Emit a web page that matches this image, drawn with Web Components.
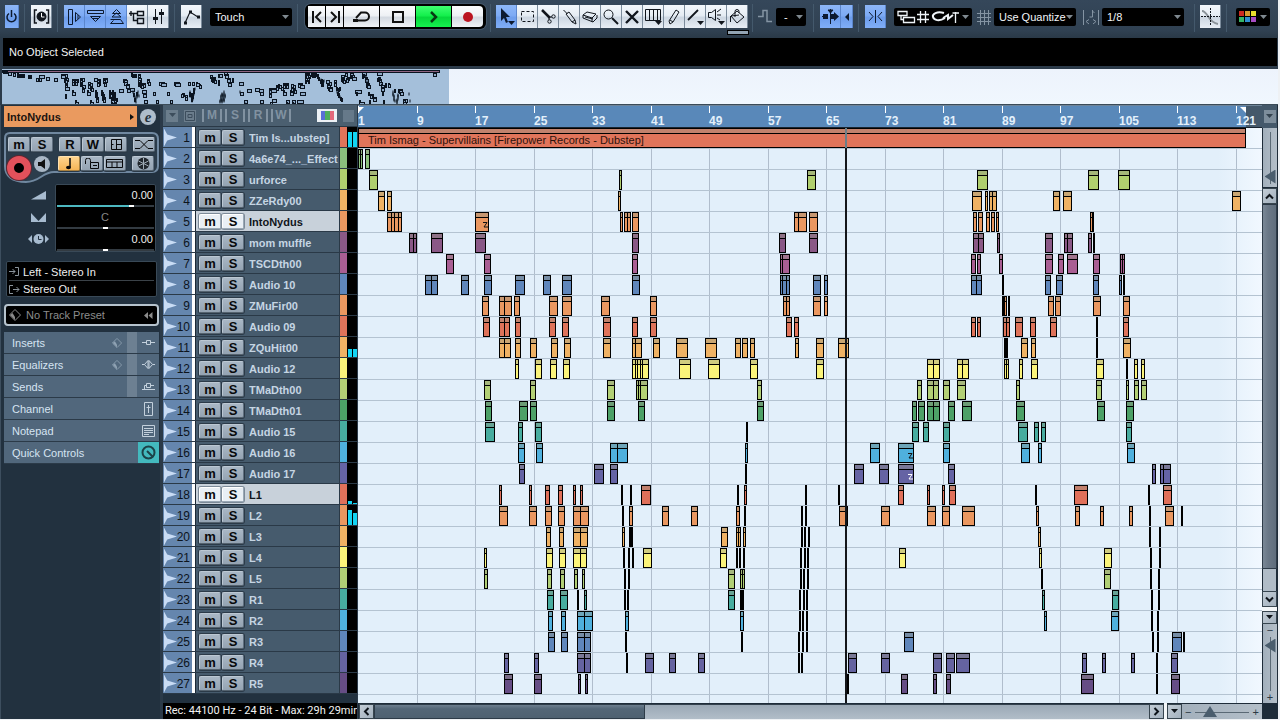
<!DOCTYPE html>
<html lang="en">
<head>
<meta charset="utf-8">
<title>Project window</title>
<style>
  html, body { height: 100%; }
  body { margin: 0; background: #eef1f4; font: 11px/14px "Liberation Sans", Arial, sans-serif; color: #fff; overflow: hidden; }
</style>
</head>
<body>
<daw-project></daw-project>
<script>
const TRACKS = [
  ["Tim Is...ubstep]", "#e0745a", "0 888"],
  ["4a6e74_..._Effect", "#8abf7c", "0 3 2 3 7 5"],
  ["urforce", "#b0cf6e", "11 9 261 3 449 9 619 11 730 11 760 12"],
  ["ZZeRdy00", "#efb264", "20 7 29 5 260 3 614 10 627 3 631 4 634 5 695 7 705 9 874 9"],
  ["IntoNydus", "#ea9760", "29 5 33 4 36 5 40 4 117 14 262 3 266 4 269 4 274 7 436 5 440 9 451 9 615 4 620 5 628 4 633 4 638 3 732 3 734 2"],
  ["mom muffle", "#8a5886", "51 5 55 4 73 12 117 11 274 7 421 7 451 9 615 6 620 6 639 3 687 8 706 4 709 6 730 4 735 2"],
  ["TSCDth00", "#a95e93", "88 8 126 7 274 6 422 3 424 8 613 5 619 4 641 4 687 8 700 6 709 11 735 7 762 3 764 3"],
  ["Audio 10", "#5f86bb", "67 7 73 7 103 8 126 8 157 10 185 8 204 10 274 8 422 3 424 5 428 4 455 8 466 4 613 6 618 6 644 2 687 6 698 7 735 6 761 3 765 2"],
  ["ZMuFir00", "#ea9760", "124 7 141 6 146 8 156 6 191 9 204 10 243 9 292 7 425 4 428 4 455 8 466 4 644 2 646 3 650 2 690 6 697 6 735 8 765 7"],
  ["Audio 09", "#df735a", "125 7 141 6 146 6 157 6 191 7 204 7 245 8 274 6 292 7 428 6 436 5 613 5 619 4 645 4 648 4 657 8 672 6 692 7 738 2 765 6"],
  ["ZQuHit00", "#efb264", "141 6 146 7 157 6 172 7 193 7 206 7 245 8 274 4 277 7 295 7 318 12 347 12 377 6 384 6 392 5 437 4 458 8 480 11 646 2 648 2 663 7 673 5 738 2 765 8"],
  ["Audio 12", "#faf37a", "157 4 177 7 192 7 205 7 274 4 277 3 279 4 282 3 284 7 321 12 350 12 392 8 458 8 569 7 575 7 599 6 604 7 646 3 648 3 661 4 673 7 738 8 768 2 776 4 783 4"],
  ["TMaDth00", "#b3d075", "126 7 172 6 249 8 278 3 280 3 282 8 399 5 559 5 569 7 575 6 585 7 599 9 658 4 738 6 768 3 776 5 783 6"],
  ["TMaDth01", "#4da167", "127 7 161 9 172 7 249 8 280 7 399 7 554 5 560 7 569 7 575 7 590 7 604 10 658 9 739 8 768 8"],
  ["Audio 15", "#47ac9f", "127 10 160 5 177 7 388 2 554 7 565 6 585 7 660 10 676 5 683 5 768 6"],
  ["Audio 16", "#4fb0dd", "160 7 178 7 252 8 259 11 387 3 512 10 540 16 585 7 663 9 680 4 769 8"],
  ["Audio 17", "#6563a4", "161 6 236 10 252 8 387 2 496 10 521 10 540 16 590 7 794 4 802 4 805 8"],
  ["L1", "#e0705a", "141 3 171 3 187 5 200 5 215 3 222 3 263 2 272 2 283 10 379 2 386 3 447 2 480 2 540 6 569 3 584 3 591 7 677 2 716 14 790 2 805 9"],
  ["L2", "#ea9760", "141 9 171 8 187 7 200 7 215 8 222 9 264 2 271 4 304 7 333 7 378 4 386 2 443 2 447 2 481 9 523 9 569 9 584 8 604 13 678 3 717 5 742 4 771 4 791 2 807 9 823 2"],
  ["L3", "#efb264", "188 5 201 5 215 8 222 8 264 3 271 2 273 2 363 7 378 3 380 3 385 3 443 2 446 2 450 2 680 3 791 2 801 2"],
  ["L4", "#faf37a", "126 3 188 7 201 7 215 8 222 7 265 2 270 2 274 2 285 9 362 7 378 2 381 2 385 2 442 2 446 2 449 2 541 7 681 3 746 8 792 2 801 2"],
  ["L5", "#b0cf75", "126 4 189 5 202 5 216 4 224 3 266 2 270 2 370 7 382 3 384 3 442 2 445 2 449 2 683 2 746 7 792 2 800 2"],
  ["R1", "#47ac9f", "189 7 202 8 219 2 226 3 266 2 269 2 370 7 382 2 384 2 441 2 445 2 448 2 684 3 754 7 793 2 800 2"],
  ["R2", "#4fb0dd", "190 5 203 5 219 8 226 9 267 4 382 4 441 2 444 2 448 2 686 3 753 8 793 2 799 2"],
  ["R3", "#5f86bb", "190 7 203 7 219 8 226 7 267 2 383 2 440 2 444 2 448 2 546 10 794 2 799 2 814 10 825 2"],
  ["R4", "#6563a0", "146 5 176 5 219 8 226 7 268 2 287 9 311 7 340 7 440 2 443 2 490 9 523 9 575 9 588 9 598 14 724 5 744 4 773 4 798 2 813 7"],
  ["R5", "#664d85", "146 9 176 8 220 3 227 3 489 2 543 7 575 4 588 5 723 13 798 2 813 9"]
].map(([name, color, clips]) => {
  const n = clips.split(" ").map(Number), list = [];
  for (let i = 0; i < n.length; i += 2) list.push([n[i], n[i + 1]]);
  return { name, color, clips: list };
});
const METERS = { 1: [15, 15], 11: [8, 8], 18: [3, 1], 19: [15, 12] };
const SELECTED = [5, 18];
const PLAYHEAD = 487;

const I = (w, h, body) => `<svg width="${w}" height="${h}" viewBox="0 0 ${w} ${h}" fill="none" stroke="currentColor" aria-hidden="true">${body}</svg>`;
const ICONS = {
  power: I(13,15,'<path d="M4 4.5a4.5 4.5 0 1 0 5 0M6.500 1v7" stroke-width="1.500"/>'),
  clock: I(17,15,'<path d="M4 1H1.500v13H4M13 1h2.500v13H13" stroke-width="1.500"/><circle cx="8.500" cy="7.500" r="4.500" fill="currentColor"/><path d="M8.500 4v4h3" stroke="#fff"/>'),
  showLeft: I(17,16,'<path d="M2.500.5h4v15h-4zM9.500 3.500l5 4.500-5 4.500zM12 6v4"/>'),
  showInfo: I(17,16,'<path d="M.5 1.500h16v3H.5zM3.500 7.500h10l-5 5zM6 9.500h5"/>'),
  showOver: I(17,16,'<path d="M8.500.5l4 4h-8zM5 7l3.500-3L13 8H4zM2.500 10.500h10l3 4h-13l3-3"/>'),
  tree: I(17,16,'<path d="M8.500 2.500h6v4h-6zM8.500 9.500h6v5h-6zM0 4.500h8M4.500 4.500v7H8M2 2v5" stroke-width="1.400"/>'),
  mixer: I(13,16,'<path d="M3.500 0v15M9.500 0v15"/><path d="M1 9.500h5M7 4.500h5" stroke-width="3"/>'),
  auto: I(17,16,'<path d="M2 14L7 3l8 5" stroke-width="1.200"/><path d="M1 14h3M6 3h3M14 8h3" stroke-width="3"/>'),
  prev: I(12,12,'<path d="M2 0v12M10 1L5 6l5 5" stroke-width="2"/>'),
  next: I(12,12,'<path d="M10 0v12M2 1l5 5-5 5" stroke-width="2"/>'),
  loop: I(20,13,'<path d="M3 10.500h10a4 4 0 0 0 0-8H9L4 8" stroke-width="2"/><path d="M1 10.500h5" stroke-width="3"/>'),
  stop: I(12,12,'<path d="M1 1h10v10H1z" stroke-width="2"/>'),
  play: I(10,12,'<path d="M2 1l5 5-5 5" stroke-width="2.500"/>'),
  rec: I(12,12,'<circle cx="6" cy="6" r="5" fill="#bb1421" stroke="none"/>'),
  cursor: I(17,19,'<path d="M3 1v13l3-3 2 5 2-1-2-5h4z" fill="currentColor" stroke="none"/><path d="M10 14h7l-3.500 4z" fill="currentColor" stroke="none"/>'),
  range: I(15,13,'<path d="M1.500 1.500h12v10h-12z" stroke-dasharray="3 2"/>'),
  split: I(15,15,'<path d="M1 1l8 8" stroke-width="2.500"/><circle cx="12.500" cy="7.500" r="1.700"/><circle cx="8.500" cy="12.500" r="1.700"/><path d="M8 8l3 0M8 8v3"/>'),
  glue: I(15,16,'<path d="M1.500 1l4 4M4 5l3-2 6 8-3 2zM10 13l4 2-1-4"/>'),
  erase: I(16,14,'<path d="M1 5l4-3 9 2-4 4zM1 5v3l10 4 4-4V5M10 8v4M3 7l8 2"/>'),
  zoom: I(16,16,'<circle cx="5.500" cy="5.500" r="4.500"/><path d="M9 9l6 6" stroke-width="2"/>'),
  mute: I(14,14,'<path d="M1 1l12 12M13 1L1 13" stroke-width="2.400"/>'),
  warp: I(17,18,'<path d="M.5 1.500h15v11H.5zM4.500 2v10M8.500 2v10M12.500 2v10"/><path d="M10 13h7l-3.500 4z" fill="currentColor" stroke="none"/>'),
  pen: I(12,16,'<path d="M8 1l3 2-6 10-3 2-1-3zM2 11l3 2"/>'),
  line: I(17,18,'<path d="M1 12L11 2" stroke-width="1.800"/><path d="M10 13h7l-3.500 4z" fill="currentColor" stroke="none"/>'),
  speak: I(17,18,'<path d="M.5 4.500h3l4-3v11l-4-3h-3zM9 4l4-3M9 7h4M9 10l3 2"/><path d="M10 13h7l-3.500 4z" fill="currentColor" stroke="none"/>'),
  bucket: I(16,16,'<path d="M2 7l6-5 7 6-7 6zM6 8V2.500a2 2 0 0 1 4 0V4M1.500 7v6M2 7l8-1"/>'),
  step: I(15,15,'<path d="M0 7.500h5V1.500h4v11h5" stroke-width="1.500"/>'),
  scroll: I(17,15,'<path d="M8.500 0v15M0 7.500h6"/><path d="M1 5h5v5H1zM9 5h3V3l5 4.500L12 12v-2H9z" fill="currentColor" stroke="none"/><path d="M6 1h5l-2.500 3z" fill="currentColor"/>'),
  small: I(6,8,'<path d="M5 0v8L1 4z" fill="currentColor" stroke="none"/>'),
  snap: I(15,13,'<path d="M7.500 0v13M1 2l4 4.500L1 11M14 2l-4 4.500 4 4.500"/>'),
  snapType: I(62,14,'<path d="M1 1.500h9v4H1zM6.500 7.500h11v5h-11zM4 5.500v4h3M20 4.500h12M20 9.500h12M23.500 1v12M28.500 1v12M58.500 2v11M55.500 3h7" stroke-width="1.300"/><path d="M47 3c-7-2-12 1-11 4s6 5 12 1M46 8l5-3v4l5-4" stroke-width="2"/>'),
  grid: I(14,16,'<path d="M0 4.500h14M0 8.500h14M0 12.500h14M3.500 1v15M7.500 1v15M11.500 1v15"/>'),
  quant: I(16,17,'<path d="M.5 1v15M15.500 1v15M9.500 1v7M6.500 8h3M9.500 2l2 2M3 12.500l3-2M3 12.500l3 2.500M13 12.500l-3-2M13 12.500L10 15"/>'),
  xfade: I(19,17,'<path d="M1 3c6 0 6 12 16 13" stroke="#8a9298" stroke-width="2"/><path d="M9.500 0v17M0 8.500h19" stroke-dasharray="2 1"/>'),
  palette: I(18,12,'<g stroke="none"><path fill="#cc2b22" d="M0 0h5v5H0z"/><path fill="#d49a31" d="M6 0h5v5H6z"/><path fill="#e8dc2c" d="M12 0h5v5h-5z"/><path fill="#35b566" d="M0 6h5v5H0z"/><path fill="#2e8fd0" d="M6 6h5v5H6z"/><path fill="#a94cc4" d="M12 6h5v5h-5z"/></g>'),
  panel: I(13,11,'<path d="M1.500.5h10v10h-10zM6.500.5v10M6.500 5.500h5M1.500 5.500h2"/>'),
  cross: I(18,11,'<path d="M0 1.500h5l8 8h5M0 9.500h5l8-8h5"/>'),
  note: I(8,12,'<path d="M5 0v9" stroke-width="1.500"/><ellipse cx="3.500" cy="9.500" rx="2.500" ry="1.800" fill="currentColor" stroke="none"/>'),
  lock: I(16,11,'<path d="M6.500 4.500h8v6h-8zM1.500 6V2.500a2 2 0 0 1 5 0v2M9 7.500h4"/>'),
  lanes: I(18,9,'<path d="M.5.5h16v8H.5zM.5 3h16M6 3v5.500M11 3v5.500"/>'),
  snow: I(13,13,'<circle cx="6.500" cy="6.500" r="6" fill="#20262c" stroke="none"/><path d="M6.500 1v11M1.500 4l10 5M11.500 4l-10 5" stroke="#9eaab4"/>'),
  mon: I(9,10,'<path d="M0 3h3l4-3v10L3 7H0z" fill="currentColor" stroke="none"/>'),
  vol: I(15,9,'<path d="M0 8.500L15 0v8.500z" fill="#a7bbcf" stroke="none"/>'),
  pan: I(15,9,'<path d="M0 0v9h15V0L7.500 8z" fill="#a7bbcf" stroke="none"/>'),
  delay: I(21,10,'<g fill="#a7bbcf" stroke="none"><path d="M4 1v8L0 5zM17 1v8l4-4z"/><circle cx="10.500" cy="5" r="5"/></g><path d="M10.500 2v3.500h3" stroke="#22303f"/>'),
  input: I(11,9,'<path d="M0 4.500h6M3.500 2L6 4.500 3.500 7M6 .5h3.500v8H6"/>'),
  output: I(11,9,'<path d="M4 .5H.5v8H4M4 4.500h6M7.500 2L10 4.500 7.500 7"/>'),
  diamond: I(12,12,'<path d="M6 .5L11.500 6 6 11.500.5 6z"/><path d="M1 6l5 5V8L3.500 4z" fill="currentColor" stroke="none"/>'),
  rew: I(9,7,'<path d="M4 0v7L0 3.500zM8.500 0v7l-4-3.500z" fill="currentColor" stroke="none"/>'),
  insert: I(13,9,'<path d="M0 4.500h4M9 4.500h4M4.500 2.500h4v4h-4z"/>'),
  eq: I(13,11,'<path d="M0 5.500h2.500L6 1.500v8L2.500 5.500M13 5.500h-2.500L7 1.500v8l3.500-4"/>'),
  send: I(13,9,'<path d="M0 7.500h13M2.500 7V3.500h2M4.500 1.500h4v4h-4zM9 3.500h3"/>'),
  chan: I(9,14,'<path d="M.5.5h8v13h-8zM4.500 3v8M2.500 5.500h4"/>'),
  notepad: I(13,12,'<path d="M.5.5h12v11H.5zM2 3.500h9M2 5.500h9M2 7.500h9M2 9.500h5"/>'),
  knob: I(15,15,'<circle cx="7.500" cy="7.500" r="6" stroke-width="2"/><path d="M6 6l6 6" stroke-width="2"/>'),
  down: I(7,5,'<path d="M0 0h7L3.500 4z" fill="currentColor" stroke="none"/>'),
  list: I(10,10,'<path d="M.5.5h9v9h-9zM3 3.500h4v3H3z"/>'),
  rgb: I(13,9,'<path fill="#5a6fd6" stroke="none" d="M0 0h4v9H0z"/><path fill="#4fae5d" stroke="none" d="M4 0h5v9H4z"/><path fill="#e3687a" stroke="none" d="M9 0h4v9H9z"/>'),
  cl: I(7,9,'<path d="M5.500 1L2 4.500 5.500 8" stroke-width="2"/>'),
  cr: I(7,9,'<path d="M1.500 1L5 4.500 1.500 8" stroke-width="2"/>'),
  cu: I(9,7,'<path d="M1 5.500L4.500 2 8 5.500" stroke-width="2"/>'),
  cd: I(9,7,'<path d="M1 1.500L4.500 5 8 1.500" stroke-width="2"/>')
};

const BASE = `<style>
  *, *::before, *::after { box-sizing: border-box; }
  button, select, input { font: inherit; color: inherit; margin: 0; padding: 0; border: 0; border-radius: 0; background: none; appearance: none; }
  svg { display: block; flex: none; }
</style>`;
function define(tag, render) {
  customElements.define(tag, class extends HTMLElement {
    connectedCallback() {
      if (this.shadowRoot) return;
      const t = document.createElement("template");
      t.innerHTML = BASE + render(this);
      this.attachShadow({ mode: "open" }).append(t.content.cloneNode(true));
    }
  });
}
const at = (el, n, d = "") => el.getAttribute(n) ?? d;

define("tool-button", el => `<style>
  :host { display: block; flex: none; width: 21px; height: 23px; }
  button { width: 100%; height: 100%; display: flex; align-items: center; justify-content: center; color: #10151c;
    background: linear-gradient(#f3f7fb, #e6edf4 45%, #cdd7e2 55%, #e8eef5); border-right: 1px solid #7b8b9b; }
  :host([pressed]) button { background: linear-gradient(#8db6f7, #7dabf5 45%, #6d9dec 55%, #80aef8); border-color: #5b86cc; color: #0c1a30; }
  :host([narrow]) { width: 14px; }
  :host([slim]) { width: 12px; }
</style><button type="button" aria-label="${at(el, "label")}">${ICONS[at(el, "icon")]}</button>`);

define("tool-select", el => `<style>
  :host { display: flex; flex: none; position: relative; height: 18px; width: 82px; background: #000; border-radius: 2px; }
  :host([mini]) { width: 30px; }
  select { width: 100%; height: 18px; padding: 0 4px 0 5px; color: #f2f5f8; border-radius: 2px; }
  :host([mini]) select { padding-left: 8px; }
  select option { background: #000; }
  :host::after { content: ""; position: absolute; right: 3px; top: 7px; width: 7px; height: 4px; background: #7f8990; clip-path: polygon(0 0, 100% 0, 50% 100%); pointer-events: none; }
</style><select aria-label="${at(el, "label")}"><option>${at(el, "value")}</option></select>`);

define("menu-button", el => `<style>
  :host { display: flex; flex: none; height: 18px; background: #000; border-radius: 2px; }
  button { display: flex; align-items: center; gap: 3px; padding: 0 3px; color: #eef3f7; }
  .c { color: #7f8990; }
</style><button type="button" aria-label="${at(el, "label")}">${ICONS[at(el, "icon")]}<span class="c">${ICONS.down}</span></button>`);

define("transport-bar", () => `<style>
  :host { display: flex; flex: none; height: 25px; padding: 2px 3px; background: #000; border-radius: 6px; box-shadow: 0 0 0 1px #43566a; gap: 1px; }
  button { width: 35px; display: flex; align-items: center; justify-content: center; color: #111; background: linear-gradient(#fbfcfd, #eef1f5 45%, #d4dae2 55%, #f0f3f7); }
  .n { width: 17px; }
  .n:first-child { border-radius: 4px 0 0 4px; margin-right: -1px; }
  .p { background: linear-gradient(#3fff70, #14f04d 45%, #06d83c 55%, #16f250); color: #083a14; }
  button:last-child { border-radius: 0 4px 4px 0; width: 31px; }
</style>
<button class="n" aria-label="Previous marker">${ICONS.prev}</button><button class="n" aria-label="Next marker">${ICONS.next}</button><button aria-label="Cycle">${ICONS.loop}</button><button aria-label="Stop">${ICONS.stop}</button><button class="p" aria-label="Play">${ICONS.play}</button><button aria-label="Record">${ICONS.rec}</button>`);

define("daw-toolbar", () => {
  const b = (icon, label, extra = "") => `<tool-button icon="${icon}" label="${label}" ${extra}></tool-button>`;
  return `<style>
  :host { display: flex; flex: none; align-items: flex-start; height: 38px; padding: 5px 0 0 5px; background: linear-gradient(#35475a, #304152 80%, #2a3947); overflow: hidden; }
  i { flex: none; width: 1px; height: 28px; margin: -1px 6px 0 5px; background: #44596c; }
  i.t { margin: -1px 5px 0 4px; }
  i.w { margin: -1px 6px 0 7px; }
  i.x { margin: -1px 5px 0 10px; }
  div { display: flex; flex: none; }
  transport-bar { margin: -1px 0 0 1px; }
  tool-select, menu-button { margin: 3px 0 0 3px; }
  .far { margin-left: 8px; }
  span { color: #8494a3; margin-top: 4px; }
  .g { margin-left: 5px; }
  .h { margin-left: 7px; }
  .fill { position: relative; }
  .fill::after { content: ""; position: absolute; left: 0; top: 25px; width: 22px; height: 5px; border: 1px solid #000; background: #93a4b3; }
</style>
${b("power", "Activate project", "pressed narrow")}<i></i>${b("clock", "Constrain delay")}<i></i>
<div>${b("showLeft", "Show inspector", "pressed")}${b("showInfo", "Show info line", "pressed")}${b("showOver", "Show overview", "pressed")}${b("tree", "Open pool")}${b("mixer", "Open mixer")}</div><i></i>
${b("auto", "Automation panel")}<tool-select class="far" label="Automation mode" value="Touch"></tool-select><i></i>
<transport-bar></transport-bar><i class="t"></i>
<div>${b("cursor", "Object selection", "pressed")}${b("range", "Range selection")}${b("split", "Split")}${b("glue", "Glue")}${b("erase", "Erase")}${b("zoom", "Zoom")}${b("mute", "Mute")}${b("warp", "Time warp")}${b("pen", "Draw")}${b("line", "Line")}${b("speak", "Play")}<div class="fill">${b("bucket", "Color")}</div></div><i class="t"></i>
<span>${ICONS.step}</span><tool-select mini label="Nudge" value="-"></tool-select><i class="w"></i>
<div>${b("scroll", "Auto-scroll", "pressed")}${b("small", "Suspend auto-scroll", "pressed slim")}</div><i></i>
${b("snap", "Snap", "pressed")}<menu-button class="far" icon="snapType" label="Snap type"></menu-button>
<span class="g">${ICONS.grid}</span><tool-select label="Grid type" value="Use Quantize"></tool-select>
<span class="h">${ICONS.quant}</span><tool-select label="Quantize" value="1/8"></tool-select><i class="x"></i>
${b("xfade", "Snap to zero crossing")}<i></i><menu-button icon="palette" label="Colors"></menu-button>`;
});

define("info-line", () => `<style>
  :host { display: flex; flex: none; align-items: center; height: 28px; margin: 0 1px 0 3px; padding: 0 6px; background: #000; color: #f4f4f4; }
</style><slot></slot>`);

define("project-overview", () => {
  let s = "";
  TRACKS.forEach((t, i) => { if (i) t.clips.forEach(([x, w]) => {
    const X = Math.round(1 + x * .492), W = w < 3 ? 0 : Math.max(1, Math.round(w * .49) - 1), Y = Math.round(i * 1.25);
    s += `<rect x="${X + .5}" y="${Y + .5}" width="${W || 1}" height="3" ${W ? "" : 'fill="#0b1420" stroke="none"'}/>`;
  }); });
  return `<style>
  :host { display: block; flex: none; height: 36px; margin: 3px 0 0 2px; background: linear-gradient(#edf3fc, #f0f7fe); border-bottom: 1px solid #3b4b58; overflow: hidden; }
  div { width: 35%; min-width: 446px; height: 100%; background: #a4bfda; }
</style><div><svg width="446" height="35" fill="#8fabc8" stroke="#0b1420"><rect x=".5" y="1.500" width="437" height="2" fill="#8d6480"/>${s}</svg></div>`;
});

define("ms-button", el => `<style>
  :host { display: block; flex: none; width: 22px; height: 15px; color: #08090b; }
  button { width: 100%; height: 100%; display: flex; align-items: center; justify-content: center; font: bold 13px/13px "Liberation Sans", Arial, sans-serif;
   background: linear-gradient(#a9b7c5, #94a3b2); border: 1px solid #6d7e8f; border-color: #bcc8d3 #5f6f7f #55636f #bcc8d3; border-radius: 2px; box-shadow: 0 0 0 1px #2b3a48; }
  :host([lit]) button { background: #e9eff5; border-color: #fff #9aa8b5 #9aa8b5 #fff; box-shadow: 0 0 0 1px #7c8a98; }
  :host([warm]) button { background: linear-gradient(#ffd48e, #f6b557); border-color: #ffe2b0 #a8803f #a8803f #ffe2b0; }
</style><button type="button" aria-label="${at(el, "label")}"><slot></slot></button>`);

define("track-inspector", () => {
  const row = (name, icon, opt = "") => `<li><a href="#">${name}</a>${opt.includes("a") ? `<em>${ICONS.diamond}</em>` : ""}${opt ? "<u></u>" : ""}<b>${ICONS[icon]}</b></li>`;
  return `<style>
  :host { display: flex; flex-direction: column; flex: none; width: 160px; padding: 1px 1px 0 3px; background: #22313f; border-left: 1px solid #3d4e5e; }
  header { display: flex; align-items: center; height: 21px; gap: 3px; }
  h2 { display: flex; align-items: center; justify-content: space-between; margin: 0; width: 133px; height: 21px; padding: 0 3px; background: #ea9a5f; color: #1c1410; font-size: 11px; }
  h2::after { content: ""; border: 3px solid transparent; border-left: 4px solid #111; border-right: 0; }
  .e { width: 16px; height: 16px; border-radius: 50%; background: #aebdcb; color: #26333f; font: italic bold 15px/14px "Liberation Serif", serif; }
  .panel { position: relative; height: 54px; margin-top: 5px; padding: 5px 4px; display: grid; grid-template-rows: 15px 15px; row-gap: 4px; align-content: start; }
  .panel > svg { position: absolute; left: 0; top: 0; }
  .r { display: flex; position: relative; gap: 1px; }
  .gap { margin-left: 5px; }
  .rec { width: 24px; height: 24px; border-radius: 50%; background: #000; border: 7px solid #e2515b; box-shadow: 0 0 0 1px #5d2630; margin-left: -1px; }
  .mon { width: 16px; height: 16px; border-radius: 50%; background: #a9b7c5; color: #111; display: flex; align-items: center; justify-content: center; margin: 0 7px 0 2px; }
  .vals { display: grid; grid-template-columns: 51px 101px; height: 66px; margin: -2px 0 11px; }
  .ic { display: grid; grid-template-rows: repeat(3, 22px); place-items: center; padding-left: 18px; }
  .box { background: #000; border: 1px solid #394957; border-radius: 2px; }
  .v { height: 22px; display: flex; flex-direction: column; justify-content: space-between; color: #eee; text-align: right; padding: 3px 1px 0; }
  .v.c { text-align: center; color: #888; }
  .v span { padding-right: 1px; height: 13px; }
  input { width: 100%; height: 2px; background: linear-gradient(#4db8c0, #4db8c0) no-repeat 0 0 / var(--p) 100% #333b42; }
  input::-webkit-slider-thumb { appearance: none; width: 5px; height: 2px; background: #fff; }
  .io { height: 36px; margin: 0 2px; padding: 1px 2px; }
  .io a { display: flex; align-items: center; gap: 3px; height: 17px; color: #eee; text-decoration: none; }
  .io a + a { border-top: 1px solid #3b4248; }
  .io svg { color: #8b949c; }
  .pre { display: flex; align-items: center; gap: 5px; width: 155px; height: 22px; margin: 7px 0 6px; padding: 0 4px 0 3px; background: #000; border: 2px solid #b6c3cd; border-radius: 4px; color: #8c8c8c; text-align: left; }
  .pre span { flex: 1; }
  ul { list-style: none; margin: 0; padding: 0; width: 155px; }
  li { display: grid; grid-template-columns: 100px 15px 10px 1fr; align-items: center; height: 22px; padding-left: 8px; background: #51677c; border-bottom: 1px solid #2b3a48; color: #d6e4f2; }
  li a { color: inherit; text-decoration: none; }
  em { color: #8fa2b3; } em svg { width: 10px; height: 10px; }
  u { grid-column: 3; width: 10px; height: 21px; background: #6d8092; }
  b { grid-column: 4; justify-self: end; width: 21px; display: flex; align-items: center; justify-content: center; height: 21px; color: #c3d0dc; }
  li:last-child b { background: #43b9be; color: #1c4248; }
</style>
<header><h2>IntoNydus</h2><button class="e" aria-label="Edit channel settings">e</button></header>
<div class="panel"><svg width="155" height="54" fill="#2c3d4c" stroke="#7088a0" stroke-width="2"><path d="M6 1h142q6 0 6 6v27q0 6-6 6H50c-12 0-14 10-28 10C8 50 1 44 1 34V6q0-5 5-5z"/></svg>
 <div class="r"><ms-button label="Mute">m</ms-button><ms-button label="Solo">S</ms-button><ms-button class="gap" label="Read">R</ms-button><ms-button label="Write">W</ms-button><ms-button label="Lanes">${ICONS.panel}</ms-button><ms-button class="gap" label="Fades">${ICONS.cross}</ms-button></div>
 <div class="r"><button class="rec" aria-label="Record enable"></button><button class="mon" aria-label="Monitor">${ICONS.mon}</button><ms-button warm label="Timebase">${ICONS.note}</ms-button><ms-button label="Lock">${ICONS.lock}</ms-button><ms-button label="Lane display">${ICONS.lanes}</ms-button><ms-button class="gap" label="Freeze">${ICONS.snow}</ms-button></div>
</div>
<div class="vals"><div class="ic">${ICONS.vol}${ICONS.pan}${ICONS.delay}</div>
 <div class="box"><div class="v"><span>0.00</span><input type="range" aria-label="Volume" value="78" style="--p:78%"></div><div class="v c"><span>C</span><input type="range" aria-label="Pan" value="50" style="--p:0%"></div><div class="v"><span>0.00</span><input type="range" aria-label="Delay" value="50" style="--p:0%"></div></div></div>
<div class="io box"><a href="#">${ICONS.input}Left - Stereo In</a><a href="#">${ICONS.output}Stereo Out</a></div>
<button class="pre">${ICONS.diamond}<span>No Track Preset</span>${ICONS.rew}</button>
<ul>${row("Inserts", "insert", "a")}${row("Equalizers", "eq", "a")}${row("Sends", "send", "s")}${row("Channel", "chan")}${row("Notepad", "notepad")}${row("Quick Controls", "knob")}</ul>`;
});

define("track-row", el => {
  const n = +at(el, "n"), m = METERS[n] || [0, 0], lit = el.hasAttribute("lit") ? "lit" : "";
  return `<style>
  :host { display: grid; grid-template-columns: 29px 3px 1fr 8px 10px; height: 21px; border-bottom: 1px solid #2a3947; background: #465b6d; color: #c5d5e3; }
  .n { display: flex; align-items: center; justify-content: space-between; background: #6586ae; color: #0d141c; padding: 1px 2px 0 1px; font-size: 12px; }
  .n i { width: 13px; height: 18px; margin-right: -2px; background: #c9dcf5; clip-path: polygon(0 0, 25% 33%, 100% 50%, 25% 67%, 0 100%); }
  .s { background: #fff; }
  .t { display: flex; align-items: center; gap: 1px; min-width: 0; padding: 1px 0 0 3px; border-left: 1px solid #1d2935; }
  .nm { flex: 1; min-width: 0; margin-left: 4px; overflow: hidden; white-space: nowrap; font-weight: bold; }
  :host([lit]) .t { background: #c8d1da; color: #10151a; }
  .c { background: ${at(el, "color")}; border-left: 1px solid #2a3947; }
  .m { display: flex; align-items: flex-end; gap: 1px; padding-left: 1px; background: #000; }
  .m b { flex: 1; background: #12d4f4; }
</style><div class="n"><i></i>${n}</div><div class="s"></div>
<div class="t"><ms-button ${lit} label="Mute track ${n}">m</ms-button><ms-button ${lit} label="Solo track ${n}">S</ms-button><div class="nm"><slot></slot></div></div>
<div class="c"></div><div class="m"><b style="height:${m[0]}px"></b><b style="height:${m[1]}px"></b></div>`;
});

define("track-list", () => `<style>
  :host { display: flex; flex-direction: column; flex: none; width: 194px; margin-left: 3px; overflow: hidden; }
  header { display: flex; align-items: center; flex: none; height: 22px; padding: 0 3px; gap: 6px; background: #4b5f70; color: #6e8191; border-bottom: 1px solid #2a3947; }
  .q { width: 12px; height: 12px; display: flex; align-items: center; justify-content: center; background: #6b7d8c; color: #3c4d5c; }
  .f { display: flex; gap: 3px; flex: 1; }
  .f button { display: flex; width: 20px; height: 13px; align-items: center; justify-content: center; font: bold 12px/13px "Liberation Sans", Arial, sans-serif; border: 2px solid #8192a1; border-width: 0 2px; color: #8192a1; }
  .w { width: 20px; height: 13px; background: #edf1f5; display: flex; align-items: center; justify-content: center; }
  .end { width: 11px; height: 12px; background: #66798a; }
  .status { flex: none; margin-top: auto; height: 16px; padding: 1px 0 1px 2px; background: #000; white-space: nowrap; overflow: hidden; color: #f2f2f2; font-family: Roboto, "Liberation Sans", sans-serif; }
</style>
<header><button class="q" aria-label="Track types">${ICONS.down}</button><button class="q" aria-label="Track display">${ICONS.list}</button><div class="f"><button>M</button><button>S</button><button>R</button><button>W</button></div><button class="w" aria-label="Track colors">${ICONS.rgb}</button><button class="end" aria-label="Divide track list"></button></header>
${TRACKS.map((t, i) => `<track-row n="${i + 1}" color="${t.color}" ${SELECTED.includes(i + 1) ? "lit" : ""}>${t.name}</track-row>`).join("")}
<div class="status">Rec: 44100 Hz - 24 Bit - Max: 29h 29min</div>`);

const barX = k => Math.floor(58.5 * k + .5);
define("time-ruler", () => `<style>
  :host { display: block; position: relative; height: 23px; flex: none; overflow: hidden; background: linear-gradient(90deg, #5988b9 888px, #44586a 888px); border-bottom: 1px solid #1a2530; border-top: 1px solid #6e8498; font: bold 12px/12px "Liberation Sans", Arial, sans-serif; color: #e3f0fb; box-sizing: border-box; }
  span { position: absolute; top: 0; padding-top: 9px; }
  span::before { content: ""; position: absolute; left: 0; top: 0; width: 1px; height: 7px; background: #fff; }
  i { position: absolute; top: 1px; width: 6px; height: 6px; background: #fff; left: 0; clip-path: polygon(0 0, 100% 0, 0 100%); }
  i + i { left: 882px; clip-path: polygon(0 0, 100% 0, 100% 100%); }
</style><i></i><i></i>${Array.from({ length: 16 }, (_, k) => `<span style="left:${barX(k)}px">${k * 8 + 1}</span>`).join("")}`);

define("track-lane", el => {
  const i = +at(el, "n") - 1, t = TRACKS[i];
  const mark = (x, w) => w >= 14 && w < 20 && (i === 4 || i === 15 || i === 16) ? `<svg width="5" height="7" fill="none" stroke="${i === 16 ? "#fff" : "#111"}"><path d="M0 1.500h4L1 6h4"/></svg>` : "";
  return `<style>
  :host { display: block; position: relative; height: 21px; border-bottom: 1px solid #b4c3d1; box-sizing: border-box; }
  div { position: absolute; top: 0; height: 20px; border: 1px solid #000; background: linear-gradient(rgba(150,150,135,.42) 4px, #000 4px 5px, transparent 5px) ${t.color}; overflow: hidden; color: #2c120c; white-space: nowrap; }
  div svg { position: absolute; right: 0; bottom: 3px; }
  span { display: block; padding: 4px 0 0 9px; }
</style>${t.clips.map(([x, w]) => `<div style="left:${x}px;width:${w}px">${mark(x, w)}${i ? "" : "<span><slot></slot></span>"}</div>`).join("")}`;
});

define("arrange-view", () => `<style>
  :host { display: block; position: relative; flex: 1; overflow: hidden; background: linear-gradient(90deg, #e2effa 860px, #f1f8ff 904px); }
  .g { position: absolute; top: 0; bottom: 0; width: 1px; background: #b0bdcc; }
  .p { position: absolute; top: 0; bottom: 0; left: ${PLAYHEAD}px; width: 2px; background: #14161a; }
  .p::before { content: ""; display: block; width: 2px; height: 20px; background: #6b7f88; }
</style>${Array.from({ length: 15 }, (_, k) => `<div class="g" style="left:${barX(k + 1)}px"></div>`).join("")}
${TRACKS.map((t, i) => `<track-lane n="${i + 1}">${i ? "" : "Tim Ismag - Supervillains [Firepower Records - Dubstep]"}</track-lane>`).join("")}<div class="p"></div>`);

const SB = `button { flex: none; display: flex; align-items: center; justify-content: center; color: #0e141a; background: linear-gradient(135deg, #c3cdd6, #a2b0bd); border: 1px solid #37454f; }
  .sl { display: flex; align-items: center; justify-content: center; background: linear-gradient(90deg, #a3b0bc, #b4bfc9); color: #2b3945; }
  input::-webkit-slider-thumb { appearance: none; background: #4a5d6d; }`;
define("h-scroller", () => `<style>${SB}
  :host { display: flex; flex: none; height: 16px; padding: 1px 0 0 1px; background: #1e2c39; box-sizing: border-box; }
  button { width: 15px; }
  .th { flex: none; width: 30%; min-width: 60px; background: linear-gradient(#6c7e8e, #536677 30%, #4e6171); border: 1px solid #2d3b48; }
  .tr { flex: 1; background: linear-gradient(#9ba9b6, #b1bdc8); border-top: 1px solid #33414d; }
  .gap { width: 3px; background: #f4f7f9; margin-top: -1px; }
  .sl { gap: 2px; width: 80px; padding: 0 3px; justify-content: space-between; }
  input { width: 54px; height: 12px; background: linear-gradient(#5a6975, #5a6975) no-repeat 0 6px / 100% 1px; }
  input::-webkit-slider-thumb { width: 14px; height: 11px; clip-path: polygon(50% 0, 100% 100%, 0 100%); }
</style><button aria-label="Scroll left">${ICONS.cl}</button><div class="th"></div><div class="tr"></div><button aria-label="Scroll right">${ICONS.cr}</button><div class="gap"></div><button aria-label="Zoom presets">${ICONS.down}</button><div class="sl"><span>−</span><input type="range" aria-label="Horizontal zoom" value="20"><span>+</span></div>`);

define("v-scroller", () => `<style>${SB}
  :host { display: flex; flex-direction: column; flex: none; width: 16px; background: #1e2c39; padding-right: 1px; box-sizing: border-box; }
  .top { height: 23px; display: flex; align-items: center; justify-content: center; background: #44586a; }
  .top button { width: 12px; height: 13px; background: #7d8d9b; border: 0; color: #33424f; }
  button { height: 16px; }
  .sl { margin: 0 0 1px 1px; flex-direction: column; }
  input { writing-mode: vertical-lr; width: 12px; background: linear-gradient(#5a6975, #5a6975) no-repeat 6px 0 / 1px 100%; }
  .a { height: 59px; width: 14px; } .a input { height: 52px; }
  .b { height: 79px; justify-content: space-between; margin-bottom: 0; } .b input { height: 54px; }
  .b span { line-height: 12px; }
  input::-webkit-slider-thumb { width: 11px; height: 14px; clip-path: polygon(0 50%, 100% 0, 100% 100%); }
  .th { flex: 1; background: linear-gradient(90deg, #7a8896, #6a7887 40%, #5e6d7c); border: 1px solid #2d3b48; }
  .tr { height: 22px; background: #b0bcc7; margin: 0 1px; }
  .gap { height: 4px; background: #f4f7f9; }
  .corner { height: 16px; }
  .d { height: 13px; }
</style><div class="top"><button aria-label="Ruler format">${ICONS.down}</button></div>
<div class="sl a"><input type="range" aria-label="Waveform zoom" value="100"></div><button aria-label="Scroll up">${ICONS.cu}</button><div class="th"></div><div class="tr"></div><button aria-label="Scroll down">${ICONS.cd}</button><div class="gap"></div><button class="d" aria-label="Track height presets">${ICONS.down}</button><div class="sl b"><span>−</span><input type="range" aria-label="Vertical zoom" value="5"><span>+</span></div><div class="corner"></div>`);

define("daw-project", () => `<style>
  :host { display: flex; flex-direction: column; height: calc(100vh - 1px); margin-right: 2px; background: #2b3a49; }
  main { flex: 1; display: flex; min-height: 0; }
  section { flex: 1; min-width: 0; display: flex; flex-direction: column; margin-left: 1px; }
  track-list { background: #22313f; }
</style>
<daw-toolbar></daw-toolbar><info-line>No Object Selected</info-line><project-overview></project-overview>
<main><track-inspector></track-inspector><track-list></track-list><section><time-ruler></time-ruler><arrange-view></arrange-view><h-scroller></h-scroller></section><v-scroller></v-scroller></main>`);
</script>
</body>
</html>
